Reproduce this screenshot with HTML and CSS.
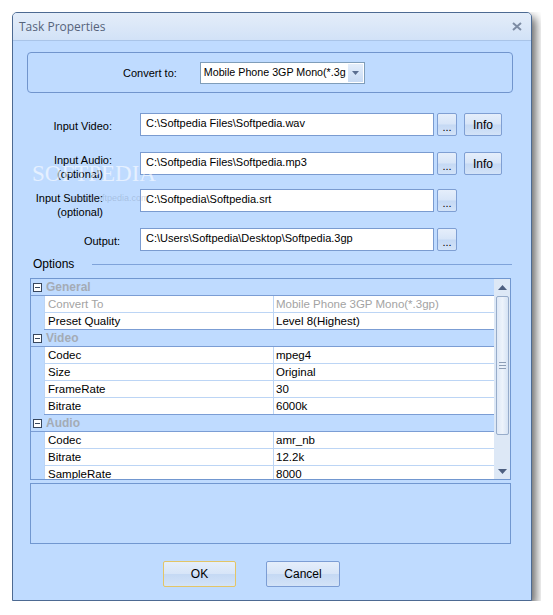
FILE: index.html
```html
<!DOCTYPE html>
<html lang="en">
<head>
<meta charset="UTF-8">
<meta name="viewport" content="width=device-width, initial-scale=1.0">
<title>Task Properties</title>
<link rel="stylesheet" href="styles.css">
</head>
<body>
<div class="window">
  <div class="titlebar">
    <span class="title">Task Properties</span>
    <svg class="close" width="10" height="9" viewBox="0 0 10 9">
      <path d="M1 1 L9 8 M9 1 L1 8" stroke="#7d8ca4" stroke-width="2" fill="none"/>
    </svg>
  </div>

  <div class="client">
    <div class="group">
      <span class="convert-label">Convert to:</span>
      <div class="combo">
        <span class="combo-text">Mobile Phone 3GP Mono(*.3g</span>
        <span class="combo-btn">
          <svg width="7" height="4" viewBox="0 0 7 4"><path d="M0 0 H7 L3.5 4 Z" fill="#5b6f90"/></svg>
        </span>
      </div>
    </div>

    <div class="row row-video">
      <div class="lbl lbl-video">Input Video:</div>
      <div class="textbox">C:\Softpedia Files\Softpedia.wav</div>
      <button class="browse">...</button>
      <button class="info">Info</button>
    </div>

    <div class="row row-audio">
      <div class="lbl lbl-audio">Input Audio:<span class="opt">(optional)</span></div>
      <div class="textbox">C:\Softpedia Files\Softpedia.mp3</div>
      <button class="browse">...</button>
      <button class="info">Info</button>
    </div>

    <div class="row row-subtitle">
      <div class="lbl lbl-subtitle">Input Subtitle:<span>(optional)</span></div>
      <div class="textbox">C:\Softpedia\Softpedia.srt</div>
      <button class="browse">...</button>
    </div>

    <div class="row row-output">
      <div class="lbl lbl-output">Output:</div>
      <div class="textbox">C:\Users\Softpedia\Desktop\Softpedia.3gp</div>
      <button class="browse">...</button>
    </div>

    <div class="options">
      <span>Options</span>
      <div class="options-line"></div>
    </div>

    <div class="propgrid">
      <div class="rows">
        <div class="cat"><span class="toggle"></span><span class="cat-name">General</span></div>
        <div class="prop readonly"><span class="pname">Convert To</span><span class="pval">Mobile Phone 3GP Mono(*.3gp)</span></div>
        <div class="prop last"><span class="pname">Preset Quality</span><span class="pval">Level 8(Highest)</span></div>

        <div class="cat"><span class="toggle"></span><span class="cat-name">Video</span></div>
        <div class="prop"><span class="pname">Codec</span><span class="pval">mpeg4</span></div>
        <div class="prop"><span class="pname">Size</span><span class="pval">Original</span></div>
        <div class="prop"><span class="pname">FrameRate</span><span class="pval">30</span></div>
        <div class="prop last"><span class="pname">Bitrate</span><span class="pval">6000k</span></div>

        <div class="cat"><span class="toggle"></span><span class="cat-name">Audio</span></div>
        <div class="prop"><span class="pname">Codec</span><span class="pval">amr_nb</span></div>
        <div class="prop"><span class="pname">Bitrate</span><span class="pval">12.2k</span></div>
        <div class="prop"><span class="pname">SampleRate</span><span class="pval">8000</span></div>
      </div>
      <div class="scrollbar">
        <div class="arrow">
          <svg width="9" height="5" viewBox="0 0 9 5"><path d="M0 5 H9 L4.5 0 Z" fill="#4d5f80"/></svg>
        </div>
        <div class="thumb"><span class="grip"></span></div>
        <div class="arrow arrow-down">
          <svg width="9" height="5" viewBox="0 0 9 5"><path d="M0 0 H9 L4.5 5 Z" fill="#4d5f80"/></svg>
        </div>
      </div>
    </div>

    <div class="desc"></div>

    <div class="buttons">
      <button class="btn btn-default">OK</button>
      <button class="btn">Cancel</button>
    </div>
  </div>

  <div class="watermark">SOFTPEDIA</div>
  <div class="watermark-url">www.softpedia.com</div>
</div>
</body>
</html>
```

FILE: styles.css
```css
body {
  margin: 12px;
  background-color: #ffffff;
  font-family: "Liberation Sans", Arial, sans-serif;
  font-size: 11px;
  color: #000;
}

.window {
  position: relative;
  width: 520px;
  height: 589px;
  box-sizing: border-box;
  border: 1px solid #4d6a92;
  border-radius: 5px 5px 0 0;
  background-color: #bfdbff;
  box-shadow: 4px 5px 10px rgba(0, 0, 0, 0.6);
  overflow: hidden;
}

.titlebar {
  display: flex;
  align-items: center;
  justify-content: space-between;
  height: 27px;
  padding: 0 9px 0 6px;
  background: linear-gradient(#e4edf9, #d2e2f7);
  border-bottom: 1px solid #a9c4e8;
}

.title {
  font-family: "Open Sans", "Liberation Sans", sans-serif;
  font-size: 12px;
  color: #56637a;
}

.client {
  display: flex;
  flex-direction: column;
}

/* top group */
.group {
  display: flex;
  align-items: center;
  margin: 11px 0 0 14px;
  width: 486px;
  height: 41px;
  box-sizing: border-box;
  border: 1px solid #7195cd;
  border-radius: 4px;
  padding-left: 95px;
}

.convert-label {
  margin-right: 23px;
}

.combo {
  display: flex;
  width: 165px;
  height: 22px;
  box-sizing: border-box;
  border: 1px solid #7f9db9;
  background-color: #fff;
}

.combo-text {
  flex: 1;
  overflow: hidden;
  white-space: nowrap;
  padding-left: 3px;
  line-height: 19px;
  font-size: 10.7px;
}

.combo-btn {
  display: flex;
  align-items: center;
  justify-content: center;
  width: 15px;
  margin: 1px;
  background: linear-gradient(#e4eefb, #c8dbf4);
}

/* file rows */
.row {
  display: flex;
  align-items: flex-start;
  height: 23px;
}

.row-video { margin-top: 20px; }
.row-audio { margin-top: 16px; }
.row-subtitle { margin-top: 14px; }
.row-output { margin-top: 16px; }

.lbl {
  width: 127px;
  box-sizing: border-box;
  text-align: right;
  line-height: 14px;
  white-space: nowrap;
}

.lbl span {
  display: block;
}

.lbl-video { padding: 6px 28px 0 0; }
.lbl-audio { padding: 1px 28px 0 0; }
.lbl-audio .opt { padding-right: 9px; }
.lbl-subtitle { padding: 2px 37px 0 0; }
.lbl-output { padding: 6px 20px 0 0; }

.textbox {
  width: 294px;
  height: 23px;
  box-sizing: border-box;
  border: 1px solid #7a9bd0;
  background-color: #fff;
  padding-left: 5px;
  line-height: 19px;
  white-space: nowrap;
  overflow: hidden;
}

.browse, .info, .btn {
  font-family: "Liberation Sans", Arial, sans-serif;
  font-size: 11px;
  color: #000;
  padding: 0;
  border: 1px solid #7f9fd3;
  border-radius: 2px;
  background: linear-gradient(#e5eefb 0%, #d7e5f8 48%, #c5d9f4 52%, #d3e3f8 100%);
}

.browse {
  width: 20px;
  height: 23px;
  margin-left: 3px;
  line-height: 26px;
}

.info {
  width: 38px;
  height: 23px;
  margin-left: 7px;
  font-size: 12px;
}

/* options label */
.options {
  display: flex;
  align-items: center;
  margin: 6px 0 0 20px;
  height: 14px;
  font-size: 12px;
}

.options-line {
  width: 420px;
  margin-left: 18px;
  border-top: 1px solid #7fa3da;
}

/* property grid */
.propgrid {
  display: flex;
  margin: 7px 0 0 17px;
  width: 481px;
  height: 202px;
  box-sizing: border-box;
  border: 1px solid #7197d0;
  background-color: #bfdbff;
  overflow: hidden;
}

.rows {
  flex: 1;
}

.cat {
  display: flex;
  align-items: center;
  height: 16px;
  border-bottom: 1px solid #7b9dd4;
  font-weight: bold;
  font-size: 12px;
  color: #a4abb5;
}

.toggle {
  position: relative;
  width: 7px;
  height: 7px;
  margin: 0 4px 0 2px;
  border: 1px solid #38475e;
  background-color: #fff;
}

.toggle::after {
  content: "";
  position: absolute;
  left: 1px;
  top: 3px;
  width: 5px;
  height: 1px;
  background-color: #38475e;
}

.prop {
  display: flex;
  height: 16px;
  margin-left: 13px;
  border-bottom: 1px solid #bcd5f5;
  background-color: #fff;
  line-height: 16px;
  font-size: 11.5px;
}

.prop.last {
  border-bottom-color: #7b9dd4;
}

.pname {
  width: 225px;
  padding-left: 3px;
  border-right: 1px solid #bcd5f5;
  border-left: 1px solid #bcd5f5;
}

.pval {
  padding-left: 2px;
  white-space: nowrap;
}

.readonly {
  color: #a3a3a3;
}

.scrollbar {
  display: flex;
  flex-direction: column;
  align-items: center;
  width: 16px;
  background-color: #dde8f6;
}

.arrow {
  display: flex;
  align-items: center;
  justify-content: center;
  height: 17px;
}

.arrow-down {
  margin-top: auto;
  height: 16px;
}

.thumb {
  display: flex;
  align-items: center;
  justify-content: center;
  width: 13px;
  height: 139px;
  box-sizing: border-box;
  border: 1px solid #97acca;
  border-radius: 2px;
  background: linear-gradient(90deg, #dfe9f7, #edf3fb 50%, #d6e3f4);
}

.grip {
  width: 7px;
  height: 5px;
  border-top: 1px solid #8c9db6;
  border-bottom: 1px solid #8c9db6;
  background: linear-gradient(#8c9db6, #8c9db6) 0 2px / 7px 1px no-repeat;
}

.desc {
  margin: 3px 0 0 17px;
  width: 481px;
  height: 61px;
  box-sizing: border-box;
  border: 1px solid #7197d0;
}

/* bottom buttons */
.buttons {
  display: flex;
  gap: 30px;
  margin: 17px 0 0 150px;
}

.btn {
  width: 74px;
  height: 26px;
  font-size: 12px;
  border-color: #7c9dd4;
}

.btn-default {
  width: 73px;
  border-color: #e3c566;
}

/* site stamp over the screenshot */
.watermark {
  position: absolute;
  left: 19px;
  top: 148px;
  font-family: "Liberation Serif", serif;
  font-size: 23px;
  color: rgba(255, 255, 255, 0.6);
}

.watermark-url {
  position: absolute;
  left: 58px;
  top: 180px;
  font-size: 9px;
  color: rgba(120, 140, 170, 0.35);
}
```
